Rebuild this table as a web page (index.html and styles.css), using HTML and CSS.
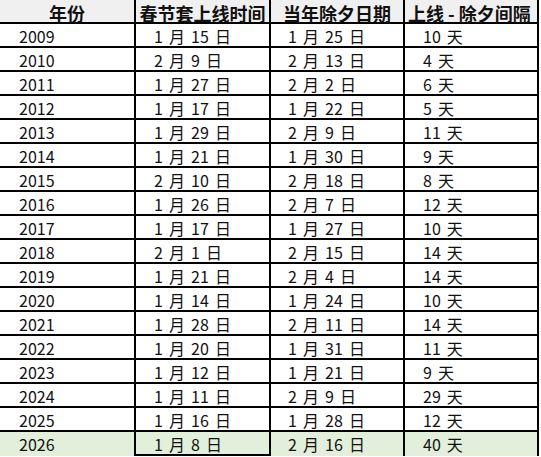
FILE: index.html
```html
<!DOCTYPE html>
<html lang="zh-CN">
<head>
<meta charset="utf-8">
<title>春节套上线时间</title>
<link rel="stylesheet" href="styles.css">
</head>
<body>
<table class="sheet">
  <thead>
    <tr class="head">
      <th>年份</th><th>春节套上线时间</th><th>当年除夕日期</th><th>上线 - 除夕间隔</th>
    </tr>
  </thead>
  <tbody>
    <tr><td>2009</td><td>1 月 15 日</td><td>1 月 25 日</td><td>10 天</td></tr>
    <tr><td>2010</td><td>2 月 9 日</td><td>2 月 13 日</td><td>4 天</td></tr>
    <tr><td>2011</td><td>1 月 27 日</td><td>2 月 2 日</td><td>6 天</td></tr>
    <tr><td>2012</td><td>1 月 17 日</td><td>1 月 22 日</td><td>5 天</td></tr>
    <tr><td>2013</td><td>1 月 29 日</td><td>2 月 9 日</td><td>11 天</td></tr>
    <tr><td>2014</td><td>1 月 21 日</td><td>1 月 30 日</td><td>9 天</td></tr>
    <tr><td>2015</td><td>2 月 10 日</td><td>2 月 18 日</td><td>8 天</td></tr>
    <tr><td>2016</td><td>1 月 26 日</td><td>2 月 7 日</td><td>12 天</td></tr>
    <tr><td>2017</td><td>1 月 17 日</td><td>1 月 27 日</td><td>10 天</td></tr>
    <tr><td>2018</td><td>2 月 1 日</td><td>2 月 15 日</td><td>14 天</td></tr>
    <tr><td>2019</td><td>1 月 21 日</td><td>2 月 4 日</td><td>14 天</td></tr>
    <tr><td>2020</td><td>1 月 14 日</td><td>1 月 24 日</td><td>10 天</td></tr>
    <tr><td>2021</td><td>1 月 28 日</td><td>2 月 11 日</td><td>14 天</td></tr>
    <tr><td>2022</td><td>1 月 20 日</td><td>1 月 31 日</td><td>11 天</td></tr>
    <tr><td>2023</td><td>1 月 12 日</td><td>1 月 21 日</td><td>9 天</td></tr>
    <tr><td>2024</td><td>1 月 11 日</td><td>2 月 9 日</td><td>29 天</td></tr>
    <tr><td>2025</td><td>1 月 16 日</td><td>1 月 28 日</td><td>12 天</td></tr>
    <tr class="hl"><td>2026</td><td>1 月 8 日</td><td>2 月 16 日</td><td>40 天</td></tr>
  </tbody>
</table>
</body>
</html>
```
FILE: styles.css
```css
html, body {
  margin: 0;
  padding: 0;
  background: #ffffff;
}

.sheet {
  border-collapse: separate;
  border-spacing: 0;
  table-layout: fixed;
  width: 539px;
  font-family: "Noto Sans CJK SC", "Noto Sans", sans-serif;
  color: #111111;
}

.sheet th,
.sheet td {
  box-sizing: border-box;
  height: 24px;
  padding: 0;
  border-right: 2px solid #000;
  border-bottom: 2px solid #000;
  white-space: nowrap;
  overflow: visible;
  vertical-align: bottom;
}

.sheet th:nth-child(1), .sheet td:nth-child(1) { width: 136px; }
.sheet th:nth-child(2), .sheet td:nth-child(2) { width: 135px; }
.sheet th:nth-child(3), .sheet td:nth-child(3) { width: 134px; }
.sheet th:nth-child(4), .sheet td:nth-child(4) { width: 134px; }

.head th {
  background: #f0f0f0;
  font-size: 18px;
  font-weight: 700;
  line-height: 18px;
  padding-top: 4px;
  text-align: center;
  color: #111111;
}

.head th:nth-child(4) {
  text-align: left;
  padding-left: 3px;
}

.sheet td {
  font-size: 16px;
  line-height: 20px;
  text-align: left;
  word-spacing: 2.5px;
}

.sheet td:nth-child(1) { padding-left: 19px; }
.sheet td:nth-child(2) { padding-left: 18px; }
.sheet td:nth-child(3) { padding-left: 17px; }
.sheet td:nth-child(4) { padding-left: 18px; }

.hl td {
  background: #e2efda;
  height: 24px;
  border-bottom: none;
  padding-bottom: 2px;
  vertical-align: top;
  padding-top: 2px;
}

.hl td:nth-child(2) {
  border-bottom: 2px solid #000;
  padding-bottom: 0;
}
```
